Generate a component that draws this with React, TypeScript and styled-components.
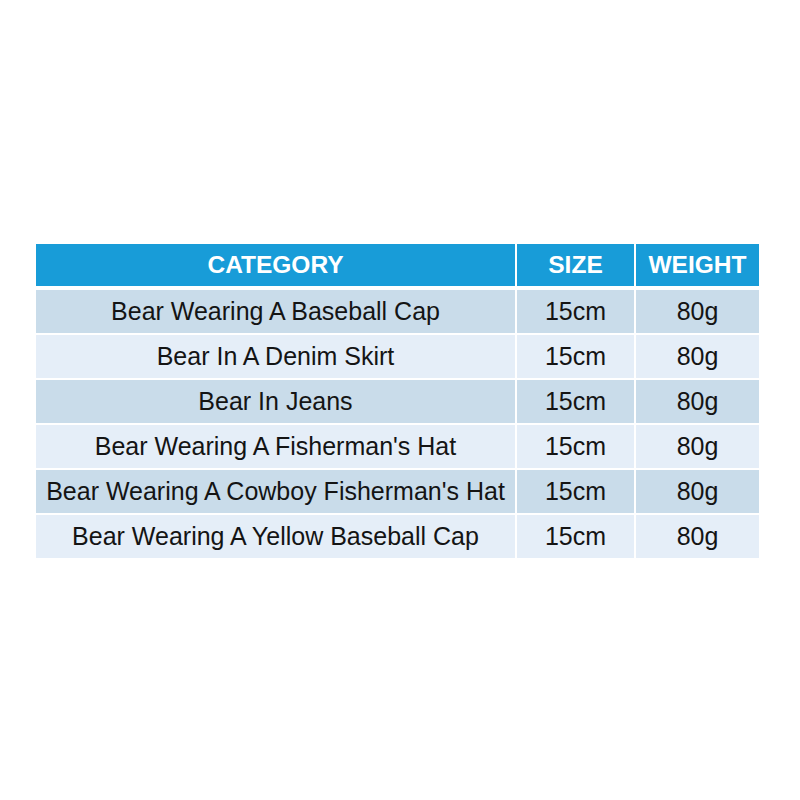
import React from 'react';
import styled, { createGlobalStyle } from 'styled-components';

const GlobalStyle = createGlobalStyle`
  html, body {
    margin: 0;
    padding: 0;
    background: #ffffff;
  }
  body {
    font-family: "Liberation Sans", Arial, sans-serif;
  }
`;

const Page = styled.div`
  width: 800px;
  height: 800px;
  box-sizing: border-box;
  padding: 244px 0 0 36px;
`;

const Table = styled.table`
  width: 723px;
  border-collapse: separate;
  border-spacing: 0;
  table-layout: fixed;
`;

const HeadCell = styled.th<{ $w: number }>`
  width: ${p => p.$w}px;
  height: 42px;
  padding: 0;
  background: #189cd8;
  color: #ffffff;
  font-size: 24.5px;
  font-weight: bold;
  text-align: center;
  vertical-align: middle;
  border-bottom: 4px solid #ffffff;
  & + & {
    border-left: 2px solid #ffffff;
  }
`;

const Row = styled.tr<{ $odd: boolean }>`
  background: ${p => (p.$odd ? '#c9dcea' : '#e5eef8')};
`;

const Cell = styled.td`
  height: 43px;
  padding: 0;
  color: #141414;
  font-size: 25px;
  text-align: center;
  vertical-align: middle;
  white-space: nowrap;
  border-bottom: 2px solid #ffffff;
  & + & {
    border-left: 2px solid #ffffff;
  }
`;

const items = [
  'Bear Wearing A Baseball Cap',
  'Bear In A Denim Skirt',
  'Bear In Jeans',
  "Bear Wearing A Fisherman's Hat",
  "Bear Wearing A Cowboy Fisherman's Hat",
  'Bear Wearing A Yellow Baseball Cap',
];

export default function App() {
  return (
    <>
      <GlobalStyle />
      <Page>
        <Table>
          <thead>
            <tr>
              <HeadCell $w={479}>CATEGORY</HeadCell>
              <HeadCell $w={117}>SIZE</HeadCell>
              <HeadCell $w={123}>WEIGHT</HeadCell>
            </tr>
          </thead>
          <tbody>
            {items.map((name, i) => (
              <Row key={name} $odd={i % 2 === 0}>
                <Cell>{name}</Cell>
                <Cell>15cm</Cell>
                <Cell>80g</Cell>
              </Row>
            ))}
          </tbody>
        </Table>
      </Page>
    </>
  );
}
